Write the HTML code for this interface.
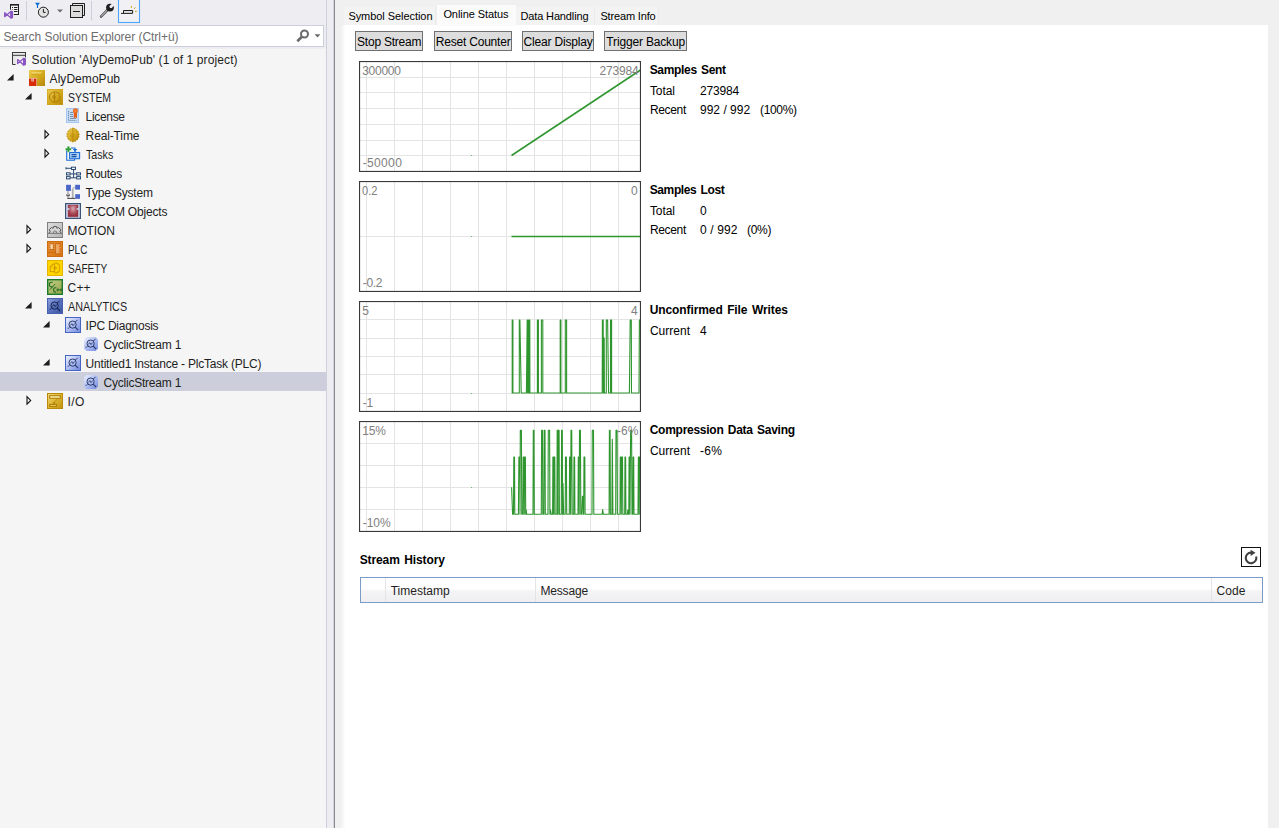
<!DOCTYPE html>
<html><head><meta charset="utf-8"><title>Solution Explorer</title>
<style>
html,body{margin:0;padding:0;}
body{width:1279px;height:828px;overflow:hidden;position:relative;background:#f0f0f0;font-family:"Liberation Sans",sans-serif;font-size:12px;color:#1e1e1e;}
.abs{position:absolute;}
.tx{position:absolute;white-space:pre;line-height:16px;height:16px;transform-origin:0 0;}
#left{position:absolute;left:0;top:0;width:326px;height:828px;background:#f5f5f5;}
#lefttop{position:absolute;left:0;top:0;width:326px;height:49px;background:#eeeef2;}
#tb{position:absolute;left:0;top:0;width:326px;height:25px;background:#eeeef2;}
#search{position:absolute;left:0;top:25px;width:323px;height:20px;background:#fff;border-top:1px solid #ccceDB;border-bottom:1px solid #ccceDB;border-right:1px solid #ccceDB;}
#gap{position:absolute;left:326px;top:0;width:6px;height:828px;background:#eeeef2;border-left:1px solid #ccceDB;border-right:1px solid #d4d4e2;}
#gapline{position:absolute;left:334px;top:0;width:1px;height:828px;background:#8a8a8a;}
#fade{position:absolute;left:341px;top:25px;width:4px;height:803px;background:linear-gradient(90deg,#f1f1f1,#fdfdfd);}
.sel{background:#cccedb;}
#content{position:absolute;left:345px;top:25px;width:923px;height:803px;background:#fff;}
.btn{position:absolute;top:31px;height:18px;border:1px solid #707070;background:#dddddd;}
</style></head><body>
<svg width="0" height="0" style="position:absolute"><defs>
<linearGradient id="gGold" x1="0" y1="0" x2="1" y2="1"><stop offset="0" stop-color="#ecc94e"/><stop offset=".55" stop-color="#d4a81c"/><stop offset="1" stop-color="#b5850a"/></linearGradient>
<linearGradient id="gGold2" x1="0" y1="0" x2="1" y2="1"><stop offset="0" stop-color="#f2dc84"/><stop offset=".5" stop-color="#dcb430"/><stop offset="1" stop-color="#c2920e"/></linearGradient>
<linearGradient id="gGray" x1="0" y1="0" x2="1" y2="1"><stop offset="0" stop-color="#dedede"/><stop offset="1" stop-color="#b4b4b4"/></linearGradient>
<linearGradient id="gOr" x1="0" y1="0" x2="1" y2="1"><stop offset="0" stop-color="#e88a2a"/><stop offset="1" stop-color="#d87410"/></linearGradient>
<linearGradient id="gOr2" x1="0" y1="0" x2="1" y2="0"><stop offset="0" stop-color="#fbe6cc"/><stop offset="1" stop-color="#f3b878"/></linearGradient>
<linearGradient id="gOr3" x1="0" y1="0" x2="1" y2="0"><stop offset="0" stop-color="#f6c088"/><stop offset="1" stop-color="#e88e38"/></linearGradient>
<linearGradient id="gGreen" x1="0" y1="0" x2="1" y2="1"><stop offset="0" stop-color="#c3d088"/><stop offset="1" stop-color="#94a548"/></linearGradient>
<linearGradient id="gBlue" x1="0" y1="0" x2="1" y2="1"><stop offset="0" stop-color="#8ea2dc"/><stop offset=".5" stop-color="#5870be"/><stop offset="1" stop-color="#3c52a2"/></linearGradient>
<linearGradient id="gBlue2" x1="0" y1="0" x2="1" y2="1"><stop offset="0" stop-color="#eef3ff"/><stop offset=".5" stop-color="#aebdf2"/><stop offset="1" stop-color="#7088de"/></linearGradient>
<radialGradient id="gRed" cx=".5" cy=".3" r=".6"><stop offset="0" stop-color="#d9acb2"/><stop offset=".6" stop-color="#b25866"/><stop offset="1" stop-color="#9a3242"/></radialGradient>
</defs></svg>
<div id="left"></div>
<div id="lefttop"></div>
<svg class="abs" style="left:0;top:0" width="326" height="25" viewBox="0 0 326 25">
<path d="M26.5 1 V20.5 M91.5 1 V20.5" stroke="#ccceDB" stroke-width="1"/>
<rect x="118.5" y="-1.5" width="21" height="24" fill="#f1f1f5" stroke="#4da6ff" stroke-width="1.1"/>
<!-- solution props icon -->
<rect x="10.5" y="4.5" width="8" height="10" fill="#f4f4f4" stroke="#1e1e1e" stroke-width="1"/><rect x="10" y="4" width="9" height="1.6" fill="#1e1e1e"/>
<path d="M12 7.5 h1 M14 7.5 h3.5 M12 9.5 h1 M14 9.5 h3.5 M12 11.5 h1 M14 11.5 h3.5" stroke="#1e1e1e" stroke-width="1"/>
<path d="M3.4 10 L13.8 9.4 L13.8 19.6 L3.4 18.8 Z" fill="#eeeef2"/>
<path d="M4.7 12.7 L4.7 16.7 L10.8 11.6 L10.8 17.8 Z" fill="none" stroke="#8a56c2" stroke-width="1.3" stroke-linejoin="round"/><path d="M10.6 10.4 L13.1 11.3 V17.9 L10.6 18.9 Z" fill="#8a56c2"/>
<!-- filter + clock -->
<path d="M35 2.8 H40 L38.1 5.2 V8 L36.9 8 V5.2 Z" fill="#0a6cd0"/>
<circle cx="43.4" cy="12.2" r="5" fill="#e2e2e2" stroke="#1e1e1e" stroke-width="1"/><path d="M43.4 9 V12.4 H45.6" fill="none" stroke="#1e1e1e" stroke-width="1"/>
<path d="M57 9.5 H63 L60 12.6 Z" fill="#6e6e6e"/>
<!-- collapse all -->
<path d="M72.5 5 V3.5 H84.5 V15.5 H83" fill="#e4e4e4" stroke="#1e1e1e" stroke-width="1"/>
<rect x="70.5" y="5.5" width="12" height="12" fill="#dcdcdc" stroke="#1e1e1e" stroke-width="1"/><path d="M73 11.5 H80" stroke="#1e1e1e" stroke-width="1"/>
<!-- wrench -->
<path d="M101 16.6 L107.6 9.8" stroke="#4a4a4a" stroke-width="2.5" stroke-linecap="round"/><path d="M101.3 16.3 L107.4 10" stroke="#e6e6e6" stroke-width="1" stroke-linecap="round"/>
<circle cx="110" cy="7.6" r="3.9" fill="#1e1e1e"/><path d="M110.4 7.2 L114.4 3.2" stroke="#eeeef2" stroke-width="2.7"/><circle cx="110.9" cy="6.7" r="1.35" fill="#eeeef2"/>
<!-- preview -->
<path d="M121 13.4 H123.5 V10.5 H132.6 V13.4 Z" fill="#e0e0e0"/><path d="M121 13.4 H132.6 V10.5 H123.5 V13.4" fill="none" stroke="#1e1e1e" stroke-width="1"/>
<path d="M131.4 6 V7.8 M134 8.7 L135.4 7.5 M135 11.4 H136.8" stroke="#c89a08" stroke-width="1"/>
</svg>
<div id="search"></div>
<svg class="abs" style="left:294px;top:27px" width="30" height="18" viewBox="294 27 30 18">
<circle cx="304.5" cy="34" r="3.5" fill="none" stroke="#6a6a6a" stroke-width="2"/><path d="M302.2 36.6 L297.3 41.2" stroke="#6a6a6a" stroke-width="2.7"/>
<path d="M314.6 34.3 H320.4 L317.5 37.4 Z" fill="#6a6a6a"/></svg>
<div id="gap"></div><div id="gapline"></div>
<div class="sel" style="position:absolute;left:0;top:372px;width:326px;height:19px"></div>
<svg class="abs" style="left:11px;top:51px" width="16" height="16" viewBox="0 0 16 16"><rect x="1.5" y="1.5" width="13" height="12" fill="#e8e8e8" stroke="none"/><rect x="1.5" y="1.5" width="13" height="2.8" fill="#ececec" stroke="#3a3a3a" stroke-width="1"/><path d="M1.5 4 V13.5 H4.6" fill="none" stroke="#3a3a3a" stroke-width="1"/><path d="M14.5 4 V7" stroke="#3a3a3a" stroke-width="1"/><path d="M5 6.4 H15.4 V15.4 H5 Z" fill="#f2f2f2" opacity=".9"/><path d="M6.6 8.6 L6.6 12.6 L12.6 7.6 L12.6 14 Z" fill="none" stroke="#8a56c2" stroke-width="1.3" stroke-linejoin="round"/><path d="M12.4 6.6 L15 7.6 V13.8 L12.4 15 Z" fill="#8a56c2"/></svg>
<svg class="abs" style="left:7.399999999999999px;top:74.4px" width="7" height="7"><path d="M6.6 0 L6.6 6.6 L0 6.6 Z" fill="#1e1e1e"/></svg>
<svg class="abs" style="left:29px;top:70px" width="16" height="16" viewBox="0 0 16 16"><rect x="0" y="0" width="16" height="16" fill="url(#gGold)"/><path d="M2.6 2.8 H12.6" stroke="#f6e48e" stroke-width="1.3" opacity=".7"/><path d="M2.6 4.6 H9.6" stroke="#c29812" stroke-width=".9" opacity=".6"/><path d="M12.8 2.6 L8.4 9.4 V15" fill="none" stroke="#c9a01a" stroke-width="1" opacity=".55"/><rect x="0" y="8" width="8" height="8" fill="#efd9c4"/><rect x="0" y="8.6" width="7.4" height="7.4" fill="#d82c08"/><rect x="2.4" y="8.6" width="2.6" height="2.8" fill="#f4d8d0"/><rect x="3.4" y="9.2" width=".9" height="1.6" fill="#d82c08"/></svg>
<svg class="abs" style="left:25.4px;top:93.4px" width="7" height="7"><path d="M6.6 0 L6.6 6.6 L0 6.6 Z" fill="#1e1e1e"/></svg>
<svg class="abs" style="left:47px;top:89px" width="16" height="16" viewBox="0 0 16 16"><rect x="0" y="0" width="16" height="16" fill="url(#gGold)"/><rect x=".5" y=".5" width="15" height="15" fill="none" stroke="#c9a11a" stroke-width="1" opacity=".6"/><path d="M7.4 3 A5 5 0 0 0 7.4 13" fill="none" stroke="#a87a08" stroke-width=".9" opacity="1"/><path d="M7.6 2.4 V13.6" stroke="#a87a08" stroke-width=".9" opacity="1"/><path d="M8.4 3 H10 L10.4 4.2 L11.8 3.8 L12.6 5.2 L11.8 6.2 L12.8 7 V9 L11.8 9.8 L12.6 10.8 L11.8 12.2 L10.4 11.8 L10 13 H8.4" fill="none" stroke="#a87a08" stroke-width=".8" opacity="1"/><circle cx="7" cy="8" r="1.3" fill="none" stroke="#a87a08" stroke-width=".8" opacity="1"/></svg>
<svg class="abs" style="left:65px;top:108px" width="16" height="16" viewBox="0 0 16 16"><rect x="1.5" y=".5" width="12" height="14" fill="#c9def6" stroke="#a4c6f0" stroke-width="1"/><path d="M3.5 3 V12.5 H11.5" fill="none" stroke="#5a7898" stroke-width=".8" stroke-dasharray="1.2 .7"/><path d="M5 4.5 H8 M5 6.5 H8 M5 8.5 H8.5 M5 10.5 H11" stroke="#6c88a8" stroke-width=".9"/><path d="M8.8 4 L8.8 10.6 L10.4 9.2 L12 10.6 L12 4 Z" fill="#e4601a"/><circle cx="10.4" cy="2.8" r="2.5" fill="#ea6a1c"/><circle cx="10.4" cy="2.8" r="1.1" fill="#f28a44"/></svg>
<svg class="abs" style="left:43.5px;top:129px" width="7" height="11"><path d="M1 1.7 L4.7 5.4 L1 9.1 Z" fill="none" stroke="#111" stroke-width="1.1"/></svg>
<svg class="abs" style="left:65px;top:127px" width="16" height="16" viewBox="0 0 16 16"><path d="M8 1.1 L10.6 1.9 L13 4 L14.1 7 L14.1 9 L13 12 L10.6 14.1 L8 14.9 L5.4 14.1 L3 12 L1.9 9 L1.9 7 L3 4 L5.4 1.9 Z" fill="url(#gGold)" stroke="#b48a0c" stroke-width=".9" stroke-dasharray="1.7 1.1"/><path d="M7.8 1.6 V14.4" stroke="#b8860b" stroke-width=".9" opacity=".8"/><circle cx="7.2" cy="8.4" r="1.5" fill="none" stroke="#b8860b" stroke-width=".8" opacity=".8"/><path d="M8.6 3.4 Q12.6 4 12.4 8 Q12.4 11.6 8.6 12.6" fill="none" stroke="#c29612" stroke-width=".7" stroke-dasharray="1.5 1.2" opacity=".75"/></svg>
<svg class="abs" style="left:43.5px;top:148px" width="7" height="11"><path d="M1 1.7 L4.7 5.4 L1 9.1 Z" fill="none" stroke="#111" stroke-width="1.1"/></svg>
<svg class="abs" style="left:65px;top:146px" width="16" height="16" viewBox="0 0 16 16"><path d="M1.7 3.5 V14.2 H9.6 V12.7" fill="none" stroke="#1b6fd8" stroke-width="1.1"/><path d="M6 2 H10 V6" fill="none" stroke="#1b6fd8" stroke-width="1.1"/><rect x="4.6" y="6.5" width="10" height="6.2" fill="#b4d2f8" stroke="#1b6fd8" stroke-width="1.1"/><path d="M6.5 8.6 H11.5 M6.5 10.6 H11.5" stroke="#0f4fa8" stroke-width="1.1"/><path d="M7.8 3 H12.4 L10.1 5.8 Z" fill="#1b6fd8"/><path d="M3.4 0.3 V6.3 M0.4 3.3 H6.4" stroke="#8fcf8f" stroke-width="2.6"/><path d="M3.4 0.8 V5.8 M0.9 3.3 H5.9" stroke="#2f9a3c" stroke-width="1.5"/></svg>
<svg class="abs" style="left:65px;top:165px" width="16" height="16" viewBox="0 0 16 16"><g fill="none" stroke="#2c4a74" stroke-width="1"><rect x="6.5" y="2.2" width="4" height="2.3"/><path d="M1 3.3 H6.5"/><path d="M1 2.2 V4.4"/><path d="M8.6 4.5 V13"/><rect x="1.5" y="7.8" width="3.6" height="2.2"/><rect x="11.6" y="7.8" width="3.9" height="2.2"/><path d="M5.1 8.9 H11.6"/><rect x="1.5" y="11.6" width="3.6" height="2.3"/><rect x="11.6" y="11.6" width="3.9" height="2.3"/><path d="M5.1 12.8 H11.6"/></g></svg>
<svg class="abs" style="left:65px;top:184px" width="16" height="16" viewBox="0 0 16 16"><rect x="1.1" y=".8" width="4.8" height="6.1" fill="#4a66c8"/><rect x="10.2" y=".8" width="4.8" height="4.8" fill="#4a66c8"/><rect x="10.2" y="10.2" width="4.8" height="4.6" fill="#4a66c8"/><path d="M8 14 V5 Q8 3.4 10 3.4" fill="none" stroke="#c2c2c2" stroke-width="1.7"/><path d="M7.3 14 V5" stroke="#8e8e8e" stroke-width=".6"/><path d="M2.3 14.4 H10.2" stroke="#3e3e3e" stroke-width="1"/><ellipse cx="3.1" cy="11" rx="1.9" ry="1.6" fill="#5a5a5a"/><path d="M2 10.5 H4.2" stroke="#e8c8d0" stroke-width=".8"/><path d="M3 7 V9.4 M3 12.6 V14" stroke="#6a6a6a" stroke-width=".8"/></svg>
<svg class="abs" style="left:65px;top:203px" width="16" height="16" viewBox="0 0 16 16"><rect x=".6" y=".6" width="14.8" height="14.8" fill="#cdd4e6" stroke="#3a5478" stroke-width="1.2"/><path d="M3.1 2.1 H13 V4.9 H11.2 V7 H13 V13.8 H3.1 V7 H4.9 V4.9 H3.1 Z" fill="url(#gRed)" stroke="#8a2434" stroke-width=".4"/></svg>
<svg class="abs" style="left:25.5px;top:224px" width="7" height="11"><path d="M1 1.7 L4.7 5.4 L1 9.1 Z" fill="none" stroke="#111" stroke-width="1.1"/></svg>
<svg class="abs" style="left:47px;top:222px" width="16" height="16" viewBox="0 0 16 16"><rect x=".5" y=".5" width="15" height="15" fill="url(#gGray)" stroke="#808080" stroke-width="1"/><path d="M1.9 10.9 L3.3 9.7 L2.3 7.7 L4.5 5.6 L6.2 6.2 L6.7 4.5 H9.4 L9.9 6.2 L11.6 5.6 L13.8 7.7 L12.8 9.7 L14.2 10.9" fill="#d4d4d4" stroke="#585858" stroke-width="1" stroke-linejoin="round"/><path d="M6.6 10.9 V10 Q6.6 9.2 7.4 9.2 H8.7 Q9.5 9.2 9.5 10 V10.9" fill="none" stroke="#6a6a6a" stroke-width=".9"/><path d="M1 11.3 H15" stroke="#707070" stroke-width="1"/></svg>
<svg class="abs" style="left:25.5px;top:243px" width="7" height="11"><path d="M1 1.7 L4.7 5.4 L1 9.1 Z" fill="none" stroke="#111" stroke-width="1.1"/></svg>
<svg class="abs" style="left:47px;top:241px" width="16" height="16" viewBox="0 0 16 16"><rect x=".5" y=".5" width="15" height="15" fill="url(#gOr)" stroke="#cc6c10" stroke-width="1"/><rect x="3" y="2.7" width="3.6" height="5.8" fill="url(#gOr2)" stroke="#b85c0a" stroke-width=".8"/><rect x="8.8" y="2.7" width="4.4" height="10.2" fill="url(#gOr3)" stroke="#b85c0a" stroke-width=".8"/><path d="M1 11.3 H8.8" stroke="#c4640c" stroke-width=".8"/><path d="M2 3.5 h1 M2 5.5 h1 M2 7.5 h1 M6.6 3.5 h1 M6.6 5.5 h1 M6.6 7.5 h1 M13.2 4 h1 M13.2 6.5 h1 M13.2 9 h1 M13.2 11.5 h1" stroke="#f2b070" stroke-width=".8"/></svg>
<svg class="abs" style="left:47px;top:260px" width="16" height="16" viewBox="0 0 16 16"><rect x=".5" y=".5" width="15" height="15" fill="#ffd600" stroke="#e4b400" stroke-width="1"/><path d="M7.6 2.6 V13.4" stroke="#c48a00" stroke-width=".8"/><path d="M8.4 3 H10 L10.4 4.2 L11.8 3.8 L12.6 5.2 L11.8 6.2 L12.8 7 V9 L11.8 9.8 L12.6 10.8 L11.8 12.2 L10.4 11.8 L10 13 H8.4" fill="none" stroke="#c48a00" stroke-width=".8"/><path d="M7 4.2 H5 V6.4 H3.2 V11.6 H7" fill="none" stroke="#c48a00" stroke-width=".8"/><path d="M5.6 8 L9.4 8 M8 6.4 L9.6 8 L8 9.6" fill="none" stroke="#c48a00" stroke-width=".8"/></svg>
<svg class="abs" style="left:47px;top:279px" width="16" height="16" viewBox="0 0 16 16"><rect x=".7" y=".7" width="14.6" height="14.6" fill="url(#gGreen)" stroke="#1d7a2c" stroke-width="1.4"/><path d="M5.6 3.4 Q2.4 2.6 2.4 5.6 Q2.4 8.4 5.4 7.8" fill="none" stroke="#1d6a26" stroke-width="1.1"/><path d="M3 10.6 L8 5.2" stroke="#1d6a26" stroke-width="1"/><path d="M9.4 8.8 Q6.6 8.2 6.6 10.8 Q6.6 13.6 9.2 13" fill="none" stroke="#1d6a26" stroke-width="1.1"/><path d="M9.4 10.9 h3 M10.9 9.4 v3 M12.6 10.9 h2.6 M13.9 9.6 v2.6" stroke="#1d6a26" stroke-width="1"/></svg>
<svg class="abs" style="left:25.4px;top:302.4px" width="7" height="7"><path d="M6.6 0 L6.6 6.6 L0 6.6 Z" fill="#1e1e1e"/></svg>
<svg class="abs" style="left:47px;top:298px" width="16" height="16" viewBox="0 0 16 16"><rect x=".5" y=".5" width="15" height="15" fill="url(#gBlue)" stroke="#4860b0" stroke-width="1"/><circle cx="7.6" cy="7.6" r="3.6" fill="none" stroke="#16244e" stroke-width="1"/><path d="M5.4 8.4 L6.8 6.6 L8 8.6 L9.6 6.6" fill="none" stroke="#16244e" stroke-width=".9"/><path d="M10.2 10.2 L13 13" stroke="#16244e" stroke-width="1.1"/><path d="M10.4 5 L12.6 2.8" stroke="#16244e" stroke-width="1"/><path d="M2.6 11.2 h1.2 M4.6 10.4 l.8 -.6" stroke="#16244e" stroke-width="1"/></svg>
<svg class="abs" style="left:43.4px;top:321.4px" width="7" height="7"><path d="M6.6 0 L6.6 6.6 L0 6.6 Z" fill="#1e1e1e"/></svg>
<svg class="abs" style="left:65px;top:317px" width="16" height="16" viewBox="0 0 16 16"><rect x=".5" y=".5" width="15" height="15" fill="url(#gBlue2)" stroke="#4664c2" stroke-width="1"/><circle cx="7.6" cy="7.6" r="3.6" fill="none" stroke="#2c3c6c" stroke-width="1"/><path d="M5.4 8.4 L6.8 6.6 L8 8.6 L9.6 6.6" fill="none" stroke="#2c3c6c" stroke-width=".9"/><path d="M10.2 10.2 L13 13" stroke="#2c3c6c" stroke-width="1.1"/><path d="M10.4 5 L12.6 2.8" stroke="#2c3c6c" stroke-width="1"/><path d="M2.6 11.2 h1.2 M4.6 10.4 l.8 -.6" stroke="#2c3c6c" stroke-width="1"/></svg>
<svg class="abs" style="left:83px;top:336px" width="16" height="16" viewBox="0 0 16 16"><path d="M3.4 1 H12.6 L15 3.4 V12.6 L12.6 15 H3.4 L1 12.6 V3.4 Z" fill="url(#gBlue2)"/><circle cx="7.6" cy="7.6" r="3.6" fill="none" stroke="#2c3c6c" stroke-width="1"/><path d="M5.4 8.4 L6.8 6.6 L8 8.6 L9.6 6.6" fill="none" stroke="#2c3c6c" stroke-width=".9"/><path d="M10.2 10.2 L13 13" stroke="#2c3c6c" stroke-width="1.1"/><path d="M10.4 5 L12.6 2.8" stroke="#2c3c6c" stroke-width="1"/><path d="M2.6 11.2 h1.2 M4.6 10.4 l.8 -.6" stroke="#2c3c6c" stroke-width="1"/></svg>
<svg class="abs" style="left:43.4px;top:359.4px" width="7" height="7"><path d="M6.6 0 L6.6 6.6 L0 6.6 Z" fill="#1e1e1e"/></svg>
<svg class="abs" style="left:65px;top:355px" width="16" height="16" viewBox="0 0 16 16"><rect x=".5" y=".5" width="15" height="15" fill="url(#gBlue2)" stroke="#4664c2" stroke-width="1"/><circle cx="7.6" cy="7.6" r="3.6" fill="none" stroke="#2c3c6c" stroke-width="1"/><path d="M5.4 8.4 L6.8 6.6 L8 8.6 L9.6 6.6" fill="none" stroke="#2c3c6c" stroke-width=".9"/><path d="M10.2 10.2 L13 13" stroke="#2c3c6c" stroke-width="1.1"/><path d="M10.4 5 L12.6 2.8" stroke="#2c3c6c" stroke-width="1"/><path d="M2.6 11.2 h1.2 M4.6 10.4 l.8 -.6" stroke="#2c3c6c" stroke-width="1"/></svg>
<svg class="abs" style="left:83px;top:374px" width="16" height="16" viewBox="0 0 16 16"><path d="M3.4 1 H12.6 L15 3.4 V12.6 L12.6 15 H3.4 L1 12.6 V3.4 Z" fill="url(#gBlue2)"/><circle cx="7.6" cy="7.6" r="3.6" fill="none" stroke="#2c3c6c" stroke-width="1"/><path d="M5.4 8.4 L6.8 6.6 L8 8.6 L9.6 6.6" fill="none" stroke="#2c3c6c" stroke-width=".9"/><path d="M10.2 10.2 L13 13" stroke="#2c3c6c" stroke-width="1.1"/><path d="M10.4 5 L12.6 2.8" stroke="#2c3c6c" stroke-width="1"/><path d="M2.6 11.2 h1.2 M4.6 10.4 l.8 -.6" stroke="#2c3c6c" stroke-width="1"/></svg>
<svg class="abs" style="left:25.5px;top:395px" width="7" height="11"><path d="M1 1.7 L4.7 5.4 L1 9.1 Z" fill="none" stroke="#111" stroke-width="1.1"/></svg>
<svg class="abs" style="left:47px;top:393px" width="16" height="16" viewBox="0 0 16 16"><rect x=".5" y=".5" width="15" height="15" fill="url(#gGold2)" stroke="#b88a0c" stroke-width="1"/><rect x="2.7" y="2.7" width="10.6" height="2.6" fill="#f7e9a6" stroke="#b07c06" stroke-width="1"/><path d="M10.6 5.8 L7.2 9.4" stroke="#b07c06" stroke-width="1" stroke-dasharray="1 .6"/><path d="M7 9 V11.2" stroke="#b07c06" stroke-width="1.4"/><rect x="2.7" y="11.4" width="6.8" height="2" fill="#e8cc5c" stroke="#b07c06" stroke-width="1"/></svg>
<div id="fade"></div><div id="content"></div>
<div class="abs" style="left:344px;top:7px;width:91px;height:18px;background:#f3f3f3;border-right:1px solid #ebebeb"></div>
<div class="abs" style="left:437px;top:5px;width:79px;height:21px;background:#fbfbfb;"></div>
<div class="abs" style="left:516px;top:7px;width:78px;height:18px;background:#f3f3f3;border-right:1px solid #ebebeb"></div>
<div class="abs" style="left:595px;top:7px;width:63px;height:18px;background:#f3f3f3;border-right:1px solid #ebebeb"></div>
<div class="btn" style="left:355px;width:66px"></div>
<div class="btn" style="left:434px;width:76px"></div>
<div class="btn" style="left:522px;width:70px"></div>
<div class="btn" style="left:604px;width:81px"></div>
<svg class="abs" style="left:359px;top:61px" width="282" height="111" viewBox="359 61 282 111"><rect x="359" y="61" width="282" height="111" fill="#fff"/><path d="M366.5 62V171 M394.5 62V171 M422.5 62V171 M450.5 62V171 M478.5 62V171 M506.5 62V171 M534.5 62V171 M562.5 62V171 M590.5 62V171 M618.5 62V171 M360 77.5H640 M360 92.5H640 M360 108.5H640 M360 124.5H640 M360 140.5H640 M360 155.5H640" stroke="#e4e4e4" stroke-width="1" fill="none"/><path d="M511.5 155.5L640.5 70" stroke="#2f962f" stroke-width="1.5" fill="none"/><rect x="471" y="155" width="1" height="1" fill="#2f962f" opacity=".6"/><rect x="359.5" y="61.5" width="281" height="110" fill="none" stroke="#383838" stroke-width="1.2"/></svg>
<svg class="abs" style="left:359px;top:181px" width="282" height="111" viewBox="359 181 282 111"><rect x="359" y="181" width="282" height="111" fill="#fff"/><path d="M366.5 182V291 M394.5 182V291 M422.5 182V291 M450.5 182V291 M478.5 182V291 M506.5 182V291 M534.5 182V291 M562.5 182V291 M590.5 182V291 M618.5 182V291 M360 236.5H640" stroke="#e4e4e4" stroke-width="1" fill="none"/><path d="M511.5 236.5H640.5" stroke="#2f962f" stroke-width="1.3" fill="none"/><rect x="471" y="236" width="1" height="1" fill="#2f962f" opacity=".6"/><rect x="359.5" y="181.5" width="281" height="110" fill="none" stroke="#383838" stroke-width="1.2"/></svg>
<svg class="abs" style="left:359px;top:301px" width="282" height="111" viewBox="359 301 282 111"><rect x="359" y="301" width="282" height="111" fill="#fff"/><path d="M366.5 302V411 M394.5 302V411 M422.5 302V411 M450.5 302V411 M478.5 302V411 M506.5 302V411 M534.5 302V411 M562.5 302V411 M590.5 302V411 M618.5 302V411 M360 319.5H640 M360 338.5H640 M360 356.5H640 M360 374.5H640 M360 393.5H640" stroke="#e4e4e4" stroke-width="1" fill="none"/><path d="M511.6 393 L512.2 393 L512.2 320 L512.9 320 L512.9 393 L519.3 393 L519.3 320 L519.9 320 L521.2 393 L526.4 393 L527.2 320 L527.6 393 L527.9 320 L528.3 393 L528.6 320 L529.0 393 L529.2 320 L529.8 320 L529.9 393 L537.4 393 L537.4 320 L538.4 320 L538.4 393 L541.4 393 L541.4 320 L542.8 320 L542.8 393 L560.2 393 L560.2 320 L560.9 320 L560.9 393 L565.3 393 L565.3 320 L566.6 320 L566.6 393 L602.2 393 L602.4 320 L603.2 320 L603.4 393 L603.6 338 L604.2 338 L604.4 393 L606.3 393 L606.3 320 L607.6 320 L608.6 393 L610.5 393 L610.5 320 L611.6 320 L611.6 393 L629.4 393 L630.2 320 L631.3 320 L631.5 393 L639.0 393 L639.4 320 L640.5 320" stroke="#2f962f" stroke-width="1.1" fill="none" stroke-linejoin="round"/><rect x="471" y="393" width="1" height="1" fill="#2f962f" opacity=".6"/><rect x="359.5" y="301.5" width="281" height="110" fill="none" stroke="#383838" stroke-width="1.2"/></svg>
<svg class="abs" style="left:359px;top:421px" width="282" height="111" viewBox="359 421 282 111"><rect x="359" y="421" width="282" height="111" fill="#fff"/><path d="M366.5 422V531 M394.5 422V531 M422.5 422V531 M450.5 422V531 M478.5 422V531 M506.5 422V531 M534.5 422V531 M562.5 422V531 M590.5 422V531 M618.5 422V531 M360 443.5H640 M360 465.5H640 M360 487.5H640 M360 509.5H640" stroke="#e4e4e4" stroke-width="1" fill="none"/><path d="M511.6 487.3 L512.6 514.3 L513.5 514.3 L513.8 457 L514.5 457 L514.8 514.3 L518.4 514.3 L518.9 457 L519.8 457 L520.0 514.3 L520.3 430.2 L521.4 430.2 L521.8 514.3 L522.9000000000001 514.3 L523.2 457 L523.9 457 L524.1999999999999 514.3 L524.3000000000001 514.3 L524.6 457 L525.4 457 L525.6999999999999 514.3 L525.8 514.3 L526.3 510 L526.6 514.3 L533.0 514.3 L533.3 430.2 L534.0 430.2 L534.3 514.3 L541.3000000000001 514.3 L541.6 430.2 L542.5 430.2 L542.8 514.3 L543.9000000000001 514.3 L544.2 430.2 L545.0 430.2 L545.3 514.3 L548.0 514.3 L548.3 430.2 L549.6 430.2 L549.9 514.3 L550.0 514.3 L550.5 510 L551.2 514.3 L552.6 514.3 L552.9 457 L553.5 457 L553.8 514.3 L553.7 514.3 L554.0 457 L554.8 457 L555.0999999999999 514.3 L556.9000000000001 514.3 L557.2 430.2 L557.8 430.2 L558.0999999999999 514.3 L557.9000000000001 514.3 L558.2 430.2 L559.1 430.2 L559.4 514.3 L561.3 514.3 L561.6 430.2 L562.3 430.2 L562.6 514.3 L563.0 483.4 L563.6 514.3 L565.2 514.3 L565.5 457 L566.4 457 L566.6999999999999 514.3 L569.3 514.3 L569.6 457 L570.4 457 L570.6 514.3 L571.0 430.2 L571.7 430.2 L572.2 514.3 L573.7 514.3 L574.0 457 L574.6 457 L574.9 514.3 L578.0 514.3 L578.3 457 L579.0 457 L579.2 514.3 L579.5 430.2 L580.4 430.2 L580.8 514.3 L581.8 514.3 L582.4 496.4 L583.0 496.4 L583.3 514.3 L583.7 514.3 L584.0 457 L584.8 457 L585.0999999999999 514.3 L592.0 514.3 L592.3 430.2 L593.5 430.2 L593.8 514.3 L602.2 514.3 L602.6 509.5 L603.4 514.3 L609.1 514.3 L609.4 430.2 L610.1 430.2 L610.4 514.3 L611.9 514.3 L612.3 439.2 L612.9 514.3 L615.7 514.3 L616.0 430.2 L617.1 430.2 L617.4 514.3 L620.0 514.3 L620.3 457 L621.0 457 L621.3 514.3 L621.3000000000001 514.3 L621.6 457 L622.5 457 L622.8 514.3 L624.7 514.3 L625.0 457 L625.6 457 L625.9 514.3 L627.4 514.3 L627.8 510 L628.3 514.3 L628.8 514.3 L629.1 457 L629.8 457 L630.0 514.3 L630.4 457 L630.7 430.2 L631.6 430.2 L632.0 514.3 L632.8000000000001 514.3 L633.1 457 L633.7 457 L634.0 514.3 L638.0 514.3 L638.4 457 L639.0 457 L639.2 514.3 L639.6 457 L640.5 457" stroke="#2f962f" stroke-width="1.1" fill="none" stroke-linejoin="round"/><rect x="471" y="487" width="1" height="1" fill="#2f962f" opacity=".6"/><rect x="359.5" y="421.5" width="281" height="110" fill="none" stroke="#383838" stroke-width="1.2"/></svg>
<svg class="abs" style="left:1241px;top:547px" width="20" height="20" viewBox="0 0 20 20"><rect x=".5" y=".5" width="19" height="19" fill="#fff" stroke="#111" stroke-width="1"/>
<path d="M15.2 9.6 A5.3 5.3 0 1 1 10 5.6" fill="none" stroke="#404040" stroke-width="2.1"/><path d="M9.6 2.7 L14.5 5.8 L9.6 8.9 Z" fill="#404040"/></svg>
<div class="abs" style="left:360px;top:577px;width:901px;height:24px;border:1px solid #7a9cc6;background:linear-gradient(#fff 0%,#fff 45%,#f4f4f5 55%,#efeff1 100%)"></div>
<div class="abs" style="left:385px;top:578px;width:1px;height:24px;background:#e3e4e6"></div>
<div class="abs" style="left:535px;top:578px;width:1px;height:24px;background:#e3e4e6"></div>
<div class="abs" style="left:1211px;top:578px;width:1px;height:24px;background:#e3e4e6"></div>
<span class="tx" style="left:3.40px;top:29.00px;color:#6d6d6d;letter-spacing:-0.04px;">Search Solution Explorer (Ctrl+ü)</span>
<span class="tx" style="left:31.60px;top:52.00px;color:#1e1e1e;letter-spacing:0.107px;">Solution 'AlyDemoPub' (1 of 1 project)</span>
<span class="tx" style="left:49.60px;top:71.00px;color:#1e1e1e;letter-spacing:0.047px;">AlyDemoPub</span>
<span class="tx" style="left:67.60px;top:90.00px;color:#1e1e1e;transform:scaleX(0.8735);">SYSTEM</span>
<span class="tx" style="left:85.60px;top:109.00px;color:#1e1e1e;letter-spacing:-0.325px;">License</span>
<span class="tx" style="left:85.60px;top:128.00px;color:#1e1e1e;letter-spacing:-0.134px;">Real-Time</span>
<span class="tx" style="left:85.60px;top:147.00px;color:#1e1e1e;transform:scaleX(0.8896);">Tasks</span>
<span class="tx" style="left:85.60px;top:166.00px;color:#1e1e1e;letter-spacing:-0.289px;">Routes</span>
<span class="tx" style="left:85.60px;top:185.00px;color:#1e1e1e;letter-spacing:-0.205px;">Type System</span>
<span class="tx" style="left:85.60px;top:204.00px;color:#1e1e1e;letter-spacing:-0.178px;">TcCOM Objects</span>
<span class="tx" style="left:67.60px;top:223.00px;color:#1e1e1e;letter-spacing:-0.15px;">MOTION</span>
<span class="tx" style="left:67.60px;top:242.00px;color:#1e1e1e;transform:scaleX(0.8268);">PLC</span>
<span class="tx" style="left:67.60px;top:261.00px;color:#1e1e1e;transform:scaleX(0.8375);">SAFETY</span>
<span class="tx" style="left:67.60px;top:280.00px;color:#1e1e1e;letter-spacing:0.138px;">C++</span>
<span class="tx" style="left:67.60px;top:299.00px;color:#1e1e1e;transform:scaleX(0.8982);">ANALYTICS</span>
<span class="tx" style="left:85.60px;top:318.00px;color:#1e1e1e;letter-spacing:-0.256px;">IPC Diagnosis</span>
<span class="tx" style="left:103.60px;top:337.00px;color:#1e1e1e;letter-spacing:-0.228px;">CyclicStream 1</span>
<span class="tx" style="left:85.60px;top:356.00px;color:#1e1e1e;letter-spacing:-0.207px;">Untitled1 Instance - PlcTask (PLC)</span>
<span class="tx" style="left:103.60px;top:375.00px;color:#1e1e1e;letter-spacing:-0.228px;">CyclicStream 1</span>
<span class="tx" style="left:67.60px;top:394.00px;color:#1e1e1e;letter-spacing:0.361px;">I/O</span>
<span class="tx" style="left:348.40px;top:8.00px;color:#000;letter-spacing:-0.056px;font-size:11px;">Symbol Selection</span>
<span class="tx" style="left:443.40px;top:6.00px;color:#000;letter-spacing:-0.073px;font-size:11px;">Online Status</span>
<span class="tx" style="left:520.40px;top:8.00px;color:#000;letter-spacing:-0.125px;font-size:11px;">Data Handling</span>
<span class="tx" style="left:600.40px;top:8.00px;color:#000;letter-spacing:-0.16px;font-size:11px;">Stream Info</span>
<span class="tx" style="left:357.10px;top:34.00px;color:#000;letter-spacing:-0.237px;">Stop Stream</span>
<span class="tx" style="left:435.85px;top:34.00px;color:#000;letter-spacing:-0.213px;">Reset Counter</span>
<span class="tx" style="left:523.60px;top:34.00px;color:#000;letter-spacing:-0.174px;">Clear Display</span>
<span class="tx" style="left:606.35px;top:34.00px;color:#000;letter-spacing:-0.167px;">Trigger Backup</span>
<span class="tx" style="left:362.20px;top:63.00px;color:#808080;letter-spacing:-0.258px;">300000</span>
<span class="tx" style="left:362.70px;top:155.00px;color:#808080;letter-spacing:0.354px;">-50000</span>
<span class="tx" style="left:599.40px;top:63.00px;color:#808080;letter-spacing:-0.158px;">273984</span>
<span class="tx" style="left:362.20px;top:183.00px;color:#808080;transform:scaleX(0.9288);">0.2</span>
<span class="tx" style="left:362.70px;top:275.00px;color:#808080;letter-spacing:-0.297px;">-0.2</span>
<span class="tx" style="left:630.90px;top:183.00px;color:#808080;letter-spacing:0.912px;">0</span>
<span class="tx" style="left:362.20px;top:303.00px;color:#808080;letter-spacing:0.312px;">5</span>
<span class="tx" style="left:362.70px;top:395.00px;color:#808080;letter-spacing:-0.086px;">-1</span>
<span class="tx" style="left:630.90px;top:303.00px;color:#808080;letter-spacing:0.912px;">4</span>
<span class="tx" style="left:362.20px;top:423.00px;color:#808080;letter-spacing:-0.177px;">15%</span>
<span class="tx" style="left:362.70px;top:515.00px;color:#808080;letter-spacing:-0.004px;">-10%</span>
<span class="tx" style="left:616.90px;top:423.00px;color:#808080;letter-spacing:0.085px;">-6%</span>
<span class="tx" style="left:649.70px;top:62.00px;color:#000;letter-spacing:-0.317px;font-weight:bold;word-spacing:1.2px;">Samples Sent</span>
<span class="tx" style="left:649.90px;top:83.00px;color:#000;letter-spacing:-0.052px;">Total</span>
<span class="tx" style="left:700.00px;top:83.00px;color:#000;letter-spacing:-0.158px;">273984</span>
<span class="tx" style="left:649.90px;top:102.00px;color:#000;letter-spacing:-0.322px;">Recent</span>
<span class="tx" style="left:700.00px;top:102.00px;color:#000;letter-spacing:0.006px;">992 / 992</span>
<span class="tx" style="left:760.00px;top:102.00px;color:#000;letter-spacing:-0.331px;">(100%)</span>
<span class="tx" style="left:649.70px;top:182.00px;color:#000;letter-spacing:-0.386px;font-weight:bold;word-spacing:1.2px;">Samples Lost</span>
<span class="tx" style="left:649.90px;top:203.00px;color:#000;letter-spacing:-0.052px;">Total</span>
<span class="tx" style="left:700.00px;top:203.00px;color:#000;letter-spacing:0.412px;">0</span>
<span class="tx" style="left:649.90px;top:222.00px;color:#000;letter-spacing:-0.322px;">Recent</span>
<span class="tx" style="left:700.00px;top:222.00px;color:#000;letter-spacing:0.128px;">0 / 992</span>
<span class="tx" style="left:747.00px;top:222.00px;color:#000;letter-spacing:-0.311px;">(0%)</span>
<span class="tx" style="left:649.70px;top:302.00px;color:#000;letter-spacing:-0.091px;font-weight:bold;word-spacing:1.2px;">Unconfirmed File Writes</span>
<span class="tx" style="left:649.90px;top:323.00px;color:#000;letter-spacing:0.012px;">Current</span>
<span class="tx" style="left:700.00px;top:323.00px;color:#000;letter-spacing:0.912px;">4</span>
<span class="tx" style="left:649.70px;top:422.00px;color:#000;letter-spacing:-0.261px;font-weight:bold;word-spacing:1.2px;">Compression Data Saving</span>
<span class="tx" style="left:649.90px;top:443.00px;color:#000;letter-spacing:0.012px;">Current</span>
<span class="tx" style="left:700.00px;top:443.00px;color:#000;letter-spacing:0.252px;">-6%</span>
<span class="tx" style="left:359.70px;top:552.00px;color:#000;letter-spacing:-0.106px;font-weight:bold;word-spacing:1.2px;">Stream History</span>
<span class="tx" style="left:390.70px;top:583.00px;color:#1e1e1e;letter-spacing:0.022px;">Timestamp</span>
<span class="tx" style="left:540.40px;top:583.00px;color:#1e1e1e;letter-spacing:-0.158px;">Message</span>
<span class="tx" style="left:1216.40px;top:583.00px;color:#1e1e1e;letter-spacing:0.103px;">Code</span>
</body></html>
